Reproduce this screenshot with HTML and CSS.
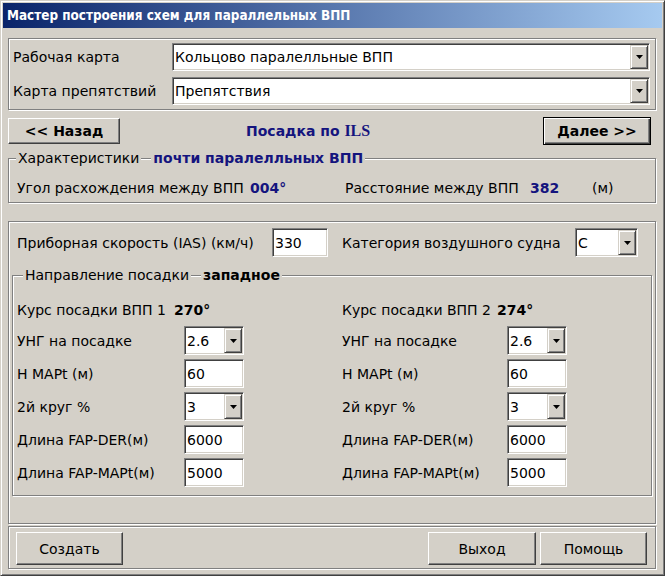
FILE: index.html
```html
<!DOCTYPE html>
<html lang="ru">
<head>
<meta charset="utf-8">
<title>Мастер построения схем для параллельных ВПП</title>
<link rel="stylesheet" href="styles.css">
</head>
<body>
<div class="window">
  <div class="titlebar"><span>Мастер построения схем для параллельных ВПП</span></div>
  <div class="content">
    <div class="panel maps">
      <span class="lbl">Рабочая карта</span>
      <div class="field combo big"><span class="val">Кольцово паралелльные ВПП</span><span class="arrow"><svg width="7" height="4" viewBox="0 0 7 4"><polygon points="0,0 7,0 3.5,4" fill="#000"/></svg></span></div>
      <span class="lbl">Карта препятствий</span>
      <div class="field combo big"><span class="val">Препятствия</span><span class="arrow"><svg width="7" height="4" viewBox="0 0 7 4"><polygon points="0,0 7,0 3.5,4" fill="#000"/></svg></span></div>
    </div>

    <div class="navrow">
      <div class="btn bold back">&lt;&lt; Назад</div>
      <div class="navtitle">Посадка по <span class="serif">ILS</span></div>
      <div class="btn bold default next">Далее &gt;&gt;</div>
    </div>

    <fieldset class="group chars">
      <legend><span>Характеристики</span><span class="seg"></span><span class="navy bold">почти паралелльных ВПП</span></legend>
      <div class="charrow">
        <span>Угол расхождения между ВПП</span>
        <span class="navy bold">004°</span>
        <span>Расстояние между ВПП</span>
        <span class="navy bold">382</span>
        <span>(м)</span>
      </div>
    </fieldset>

    <div class="panel params">
      <div class="iasrow">
        <span>Приборная скорость (IAS) (км/ч)</span>
        <div class="field"><span class="val">330</span></div>
        <span></span>
        <span>Категория воздушного судна</span>
        <div class="field combo"><span class="val">C</span><span class="arrow"><svg width="7" height="4" viewBox="0 0 7 4"><polygon points="0,0 7,0 3.5,4" fill="#000"/></svg></span></div>
      </div>

      <fieldset class="group dir">
        <legend><span>Направление посадки</span><span class="seg"></span><span class="bold">западное</span></legend>
        <div class="courserow">
          <span>Курс посадки ВПП 1</span>
          <span class="bold">270°</span>
          <span>Курс посадки ВПП 2</span>
          <span class="bold">274°</span>
        </div>
        <div class="dirgrid">
          <span>УНГ на посадке</span>
          <div class="field combo"><span class="val">2.6</span><span class="arrow"><svg width="7" height="4" viewBox="0 0 7 4"><polygon points="0,0 7,0 3.5,4" fill="#000"/></svg></span></div>
          <span></span>
          <span>УНГ на посадке</span>
          <div class="field combo"><span class="val">2.6</span><span class="arrow"><svg width="7" height="4" viewBox="0 0 7 4"><polygon points="0,0 7,0 3.5,4" fill="#000"/></svg></span></div>

          <span>Н MAPt (м)</span>
          <div class="field"><span class="val">60</span></div>
          <span></span>
          <span>Н MAPt (м)</span>
          <div class="field"><span class="val">60</span></div>

          <span>2й круг %</span>
          <div class="field combo"><span class="val">3</span><span class="arrow"><svg width="7" height="4" viewBox="0 0 7 4"><polygon points="0,0 7,0 3.5,4" fill="#000"/></svg></span></div>
          <span></span>
          <span>2й круг %</span>
          <div class="field combo"><span class="val">3</span><span class="arrow"><svg width="7" height="4" viewBox="0 0 7 4"><polygon points="0,0 7,0 3.5,4" fill="#000"/></svg></span></div>

          <span>Длина FAP-DER(м)</span>
          <div class="field"><span class="val">6000</span></div>
          <span></span>
          <span>Длина FAP-DER(м)</span>
          <div class="field"><span class="val">6000</span></div>

          <span>Длина FAP-MAPt(м)</span>
          <div class="field"><span class="val">5000</span></div>
          <span></span>
          <span>Длина FAP-MAPt(м)</span>
          <div class="field"><span class="val">5000</span></div>
        </div>
      </fieldset>
    </div>

    <div class="panel footer">
      <div class="btn create">Создать</div>
      <div class="btn exit">Выход</div>
      <div class="btn help">Помощь</div>
    </div>
  </div>
</div>
</body>
</html>
```

FILE: styles.css
```css
* { box-sizing: border-box; }

body {
  margin: 0;
  background: #d4d0c8;
  font-family: "DejaVu Sans", Verdana, sans-serif;
  font-size: 14px;
  color: #000;
}

.window {
  width: 665px;
  height: 576px;
  border: 1px solid;
  border-color: #d4d0c8 #404040 #404040 #d4d0c8;
  box-shadow: inset 1px 1px #fff, inset -1px -1px #808080;
  padding: 2px;
  display: flex;
  flex-direction: column;
  background: #d4d0c8;
}

.titlebar {
  height: 25px;
  flex: none;
  background: linear-gradient(to right, #0a246a, #a6caf0);
  color: #fff;
  font-family: "DejaVu Sans Condensed", "DejaVu Sans", sans-serif;
  font-weight: bold;
  font-size: 13.4px;
  display: flex;
  align-items: center;
  padding-left: 4px;
}

.content {
  flex: 1;
  display: flex;
  flex-direction: column;
  padding: 10px 6px 0 5px;
}

.panel {
  border: 1px solid #808080;
  box-shadow: inset 1px 1px #fff, 1px 1px #fff;
}

.bold { font-weight: bold; }
.navy { color: #14147e; }
.serif { font-family: "Liberation Serif", serif; font-size: 16px; }

.maps {
  display: grid;
  grid-template-columns: 159px 1fr;
  grid-auto-rows: 28px;
  row-gap: 6px;
  align-items: center;
  padding: 4px 5px 4px 4px;
}

.field {
  height: 29px;
  background: #fff;
  border: 1px solid;
  border-color: #808080 #fff #fff #808080;
  box-shadow: inset 1px 1px #404040, inset -1px -1px #d4d0c8;
  padding: 1px 1px 1px 2px;
  display: flex;
  align-items: stretch;
}

.field.big { height: 28px; }

.field .val {
  flex: 1;
  display: flex;
  align-items: center;
  white-space: nowrap;
  overflow: hidden;
}

.combo .arrow {
  width: 18px;
  flex: none;
  background: #d4d0c8;
  border: 1px solid;
  border-color: #d4d0c8 #404040 #404040 #d4d0c8;
  box-shadow: inset 1px 1px #fff, inset -1px -1px #808080;
  display: flex;
  align-items: center;
  justify-content: center;
}

.combo .arrow svg { display: block; }

.navrow {
  margin-top: 7px;
  height: 27px;
  flex: none;
  display: flex;
  align-items: center;
}

.btn {
  background: #d4d0c8;
  border: 1px solid;
  border-color: #fff #404040 #404040 #fff;
  box-shadow: inset -1px -1px #808080;
  display: flex;
  align-items: center;
  justify-content: center;
  white-space: nowrap;
}

.btn.default {
  border-color: #000;
  box-shadow: inset 1px 1px #fff, inset -1px -1px #404040, inset -2px -2px #808080;
}

.back { width: 112px; height: 26px; }

.navtitle {
  margin-left: 126px;
  font-weight: bold;
  color: #14147e;
}

.next { width: 108px; height: 28px; margin-left: auto; margin-right: 5px; }

.group {
  margin: 0;
  padding: 0;
  min-width: 0;
  border: 1px solid #808080;
  box-shadow: inset 1px 1px #fff, 1px 1px #fff;
}

.group legend {
  display: flex;
  align-items: center;
  height: 18px;
  padding: 0 2px;
  background: #d4d0c8;
  white-space: nowrap;
}

.seg {
  width: 10px;
  height: 2px;
  border-top: 1px solid #808080;
  border-bottom: 1px solid #fff;
  margin: 1px 2px 0 2px;
}

.chars {
  margin-top: 5px;
}

.chars legend { margin-left: 7px; }

.charrow {
  display: grid;
  grid-template-columns: 233px 95px 185px 62px auto;
  height: 18px;
  align-items: center;
  margin: 12px 0 5px 8px;
}

.params {
  margin-top: 18px;
  padding: 6px 3px 27px 3px;
}

.iasrow {
  display: grid;
  grid-template-columns: 255px 56px 14px 233px 63px;
  height: 29px;
  align-items: center;
  padding-left: 5px;
}

.dir {
  margin-top: 9px;
  padding: 11px 4px 8px 4px;
}

.dir legend { margin-left: 6px; }

.courserow {
  display: grid;
  grid-template-columns: 157px 168px 155px auto;
  height: 29px;
  align-items: center;
  margin-bottom: 2px;
}

.dirgrid {
  display: grid;
  grid-template-columns: 167px 60px 98px 165px 60px;
  grid-auto-rows: 29px;
  row-gap: 4px;
  align-items: center;
}

.footer {
  margin-top: 2px;
  display: flex;
  padding: 5px 8px 3px 7px;
}

.footer .btn { height: 33px; }
.create { width: 107px; }
.exit { width: 108px; margin-left: auto; margin-right: 4px; }
.help { width: 107px; }
```
